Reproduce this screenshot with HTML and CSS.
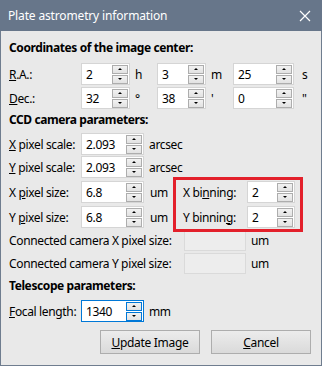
FILE: index.html
```html
<!DOCTYPE html>
<html lang="en">
<head>
    <meta charset="UTF-8">
    <title>Plate astrometry information</title>
    <link rel="stylesheet" href="styles.css">
</head>
<body>
    <div class="window">
        <div class="titlebar">
            <span class="title">Plate astrometry information</span>
            <svg class="close" width="12" height="12" viewBox="0 0 12 12">
                <path d="M1 1 L11 11 M11 1 L1 11" stroke="#fff" stroke-width="1.2" fill="none"/>
            </svg>
        </div>

        <div class="content">
            <div class="heading">Coordinates of the image center:</div>

            <div class="row first">
                <span class="label"><u>R</u>.A.:</span>
                <div class="spin w49"><span class="val">2</span><span class="arrows"><i class="up"></i><i class="down"></i></span></div>
                <span class="unit u27">h</span>
                <div class="spin w49"><span class="val">3</span><span class="arrows"><i class="up"></i><i class="down"></i></span></div>
                <span class="unit u27">m</span>
                <div class="spin w61"><span class="val">25</span><span class="arrows"><i class="up"></i><i class="down"></i></span></div>
                <span class="unit last">s</span>
            </div>
            <div class="row">
                <span class="label"><u>D</u>ec.:</span>
                <div class="spin w49"><span class="val">32</span><span class="arrows"><i class="up"></i><i class="down"></i></span></div>
                <span class="unit u27">°</span>
                <div class="spin w49"><span class="val">38</span><span class="arrows"><i class="up"></i><i class="down"></i></span></div>
                <span class="unit u27">'</span>
                <div class="spin w61"><span class="val">0</span><span class="arrows"><i class="up"></i><i class="down"></i></span></div>
                <span class="unit last">"</span>
            </div>

            <div class="heading">CCD camera parameters:</div>

            <div class="row">
                <span class="label"><u>X</u> pixel scale:</span>
                <div class="spin w63"><span class="val">2.093</span><span class="arrows"><i class="up"></i><i class="down"></i></span></div>
                <span class="unit">arcsec</span>
            </div>
            <div class="row tight">
                <span class="label"><u>Y</u> pixel scale:</span>
                <div class="spin w63"><span class="val">2.093</span><span class="arrows"><i class="up"></i><i class="down"></i></span></div>
                <span class="unit">arcsec</span>
            </div>
            <div class="row loose">
                <span class="label">X <u>p</u>ixel size:</span>
                <div class="spin w63"><span class="val">6.8</span><span class="arrows"><i class="up"></i><i class="down"></i></span></div>
                <span class="unit u39">um</span>
                <span class="bin-label">X bi<u>n</u>ning:</span>
                <div class="spin w48"><span class="val">2</span><span class="arrows"><i class="up"></i><i class="down"></i></span></div>
            </div>
            <div class="row loose">
                <span class="label">Y <u>p</u>ixel size:</span>
                <div class="spin w63"><span class="val">6.8</span><span class="arrows"><i class="up"></i><i class="down"></i></span></div>
                <span class="unit u39">um</span>
                <span class="bin-label">Y binnin<u>g</u>:</span>
                <div class="spin w48"><span class="val">2</span><span class="arrows"><i class="up"></i><i class="down"></i></span></div>
            </div>

            <div class="row small">
                <span class="label wide">Connected camera X pixel size:</span>
                <div class="field"></div>
                <span class="unit">um</span>
            </div>
            <div class="row small">
                <span class="label wide">Connected camera Y pixel size:</span>
                <div class="field"></div>
                <span class="unit">um</span>
            </div>

            <div class="heading tele">Telescope parameters:</div>

            <div class="row focal">
                <span class="label"><u>F</u>ocal length:</span>
                <div class="spin w63 focused"><span class="val">1340</span><span class="arrows"><i class="up"></i><i class="down"></i></span></div>
                <span class="unit">mm</span>
            </div>

            <div class="buttons">
                <button class="btn"><u>U</u>pdate Image</button>
                <button class="btn"><u>C</u>ancel</button>
            </div>
        </div>

        <div class="highlight"></div>
    </div>
</body>
</html>
```

FILE: styles.css
```css
body {
    margin: 0;
    font-family: "Noto Sans", sans-serif;
    font-size: 12px;
    letter-spacing: -0.35px;
    color: #000;
}

.window {
    position: relative;
    width: 322px;
    height: 366px;
    box-sizing: border-box;
    border: 1px solid #6f7d8f;
    border-top: none;
    background: #e9e9e9;
}

.titlebar {
    height: 31px;
    background: #67768a;
    color: #fff;
    display: flex;
    align-items: center;
    justify-content: space-between;
    padding: 0 11px 0 8px;
    margin: 0 -1px;
}

.title {
    font-size: 12px;
    letter-spacing: -0.15px;
}

.content {
    padding: 6px 8px 0 8px;
}

.heading {
    height: 22px;
    line-height: 22px;
    font-weight: bold;
    letter-spacing: -0.4px;
}

.heading.tele {
    margin-top: 1px;
}

.row {
    display: flex;
    align-items: center;
    height: 22px;
    margin-top: 2px;
}

.row.first {
    margin-top: 4px;
}

.row.tight {
    margin-top: 1px;
}

.row.loose {
    margin-top: 3px;
}

.row.small {
    margin-top: 1px;
}

.row.focal {
    margin-top: 3px;
}

.label {
    width: 72px;
    flex: none;
}

.label.wide {
    width: 175px;
}

.bin-label {
    width: 64px;
    flex: none;
}

.unit {
    flex: none;
    padding-left: 5px;
    box-sizing: border-box;
}

.unit.u27 {
    width: 27px;
}

.unit.u39 {
    width: 39px;
    padding-left: 6px;
}

.unit.last {
    padding-left: 8px;
}

.spin {
    display: flex;
    align-items: center;
    justify-content: space-between;
    height: 22px;
    box-sizing: border-box;
    border: 1px solid #d5d5d5;
    background: #fff;
    flex: none;
}

.w48 { width: 48px; }
.w49 { width: 49px; }
.w61 { width: 61px; }
.w63 { width: 63px; }

.val {
    padding-left: 4px;
}

.arrows {
    display: flex;
    flex-direction: column;
    gap: 1px;
    margin-right: 1px;
}

.arrows i {
    display: flex;
    align-items: center;
    justify-content: center;
    width: 16px;
    height: 9px;
    box-sizing: border-box;
    border: 1px solid #adadad;
    background: linear-gradient(#f2f2f2, #e2e2e2);
}

.arrows i::after {
    content: "";
    border-left: 2px solid transparent;
    border-right: 2px solid transparent;
}

.arrows .up::after {
    border-bottom: 2px solid #000;
}

.arrows .down::after {
    border-top: 2px solid #000;
}

.spin.focused {
    border-color: #0078d7;
}

.spin.focused .arrows i {
    border-color: #0078d7;
}

.field {
    width: 62px;
    height: 21px;
    box-sizing: border-box;
    border: 1px solid #dadada;
    background: #ededed;
    flex: none;
}

.buttons {
    display: flex;
    justify-content: flex-end;
    gap: 11px;
    margin-top: 8px;
    padding-right: 2px;
}

.btn {
    width: 100px;
    height: 24px;
    border: 1px solid #adadad;
    background: linear-gradient(#ececec, #dadada);
    font-family: inherit;
    font-size: 12px;
    letter-spacing: -0.3px;
    color: #000;
    padding: 0;
}

.highlight {
    position: absolute;
    left: 172px;
    top: 177px;
    width: 130px;
    height: 55px;
    box-sizing: border-box;
    border: 3px solid #e3202b;
}
```
